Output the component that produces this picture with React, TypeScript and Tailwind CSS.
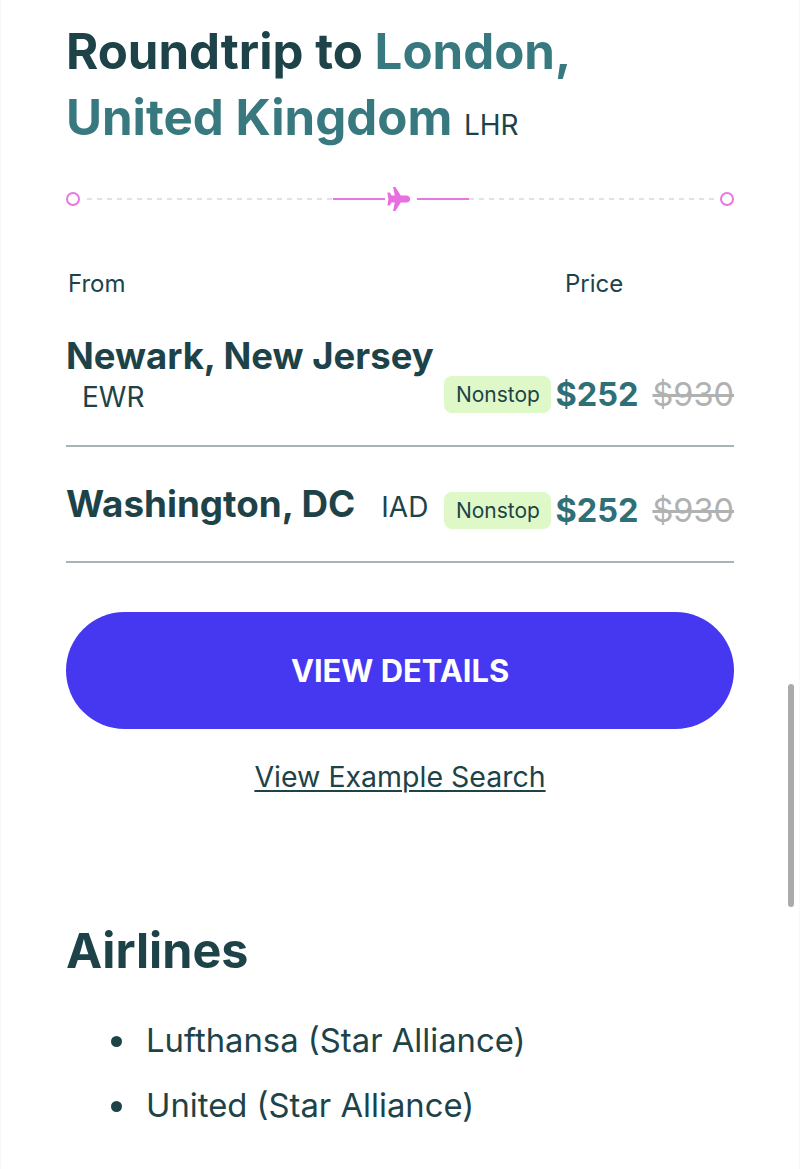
import React from "react";

const Plane = () => (
  <svg width="26" height="26" viewBox="1 0 26 26" className="ml-[1px] mr-[5px] shrink-0">
    <path
      d="M8 1h2.4l5.4 8.4h5.4c2.3 0 4 1.6 4 3.6s-1.7 3.6-4 3.6h-5.4L10.4 25H8l1.8-8.4H6.6l-1.8 3H2.4l1-6.6-1-6.6h2.4l1.8 3h3.2z"
      fill="#e86fe0"
    />
  </svg>
);

const Ring = () => <span className="h-[14px] w-[14px] shrink-0 rounded-full border-2 border-[#e878e0]" />;

const Dashes = () => (
  <span className="h-[2px] flex-1 bg-[repeating-linear-gradient(90deg,#e0e3e3_0px,#e0e3e3_5px,transparent_5px,transparent_10px)]" />
);

const Fares = () => (
  <div className="flex items-center">
    <span className="flex h-[37px] w-[107px] items-center justify-center rounded-lg bg-[#dff8c8] text-[21px] text-[#1d4349]">Nonstop</span>
    <span className="ml-[4px] text-[32.5px] font-bold leading-[37px] text-[#2f6f76]">$252</span>
    <span className="ml-[14px] text-[32.5px] leading-[37px] text-[#b0b2b2] line-through">$930</span>
  </div>
);

export default function App() {
  return (
    <div className="relative h-[1169px] w-[800px] overflow-hidden border-x border-[#f9f9f9] bg-white px-[65px] pt-[18px] font-['Inter',sans-serif] text-[#1d4349]">
      <h1 className="text-[49.2px] font-bold leading-[66px]">
        Roundtrip to <span className="text-[#38787f]">London,</span>
        <br />
        <span className="text-[#38787f]">United Kingdom</span> <span className="text-[28px] font-normal">LHR</span>
      </h1>

      <div className="mt-[28px] flex h-[26px] items-center">
        <Ring />
        <span className="ml-[7px]"></span>
        <Dashes />
        <span className="h-[2px] w-[52px] bg-[#e878e0]" />
        <Plane />
        <span className="h-[2px] w-[52px] bg-[#e878e0]" />
        <Dashes />
        <span className="ml-[5px]"></span>
        <Ring />
      </div>

      <div className="mt-[56px] flex text-[24px] leading-[32px]">
        <span className="ml-[2px] w-[497px]">From</span>
        <span>Price</span>
      </div>

      <div className="flex h-[147px] items-end justify-between border-b-2 border-[#a6b5b8] pb-[32px]">
        <div className="-mb-[2px] flex flex-col">
          <span className="mb-[3px] text-[36.5px] font-bold leading-[40px]">Newark, New Jersey</span>
          <span className="pl-4 text-[28px] leading-[36px]">EWR</span>
        </div>
        <Fares />
      </div>

      <div className="flex h-[116px] items-end justify-between border-b-2 border-[#a6b5b8] pb-[32px]">
        <div className="mb-[4px] flex items-baseline">
          <span className="text-[36.8px] font-bold leading-[40px]">Washington, DC</span>
          <span className="ml-[26px] text-[28px] leading-[36px]">IAD</span>
        </div>
        <Fares />
      </div>

      <button className="mt-[49px] flex h-[117px] w-full items-center justify-center rounded-full bg-[#4538f0] pt-[2px] text-[30.9px] font-bold text-white">
        VIEW DETAILS
      </button>
      <div className="mt-[28px] text-center">
        <a className="text-[28.5px] leading-[40px] underline decoration-2 underline-offset-[3px]">View Example Search</a>
      </div>

      <h2 className="mt-[125px] text-[48.5px] font-bold leading-[58px]">Airlines</h2>
      <ul className="mt-[40px] list-disc pl-[73px] text-[32.8px] leading-[40px] marker:text-[#1d4349]">
        <li className="pl-[7px]">Lufthansa (Star Alliance)</li>
        <li className="mt-[25px] pl-[7px]">United (Star Alliance)</li>
      </ul>

      <div className="absolute right-[5px] top-[684px] h-[223px] w-[6px] rounded-full bg-[#ababab]" />
    </div>
  );
}
